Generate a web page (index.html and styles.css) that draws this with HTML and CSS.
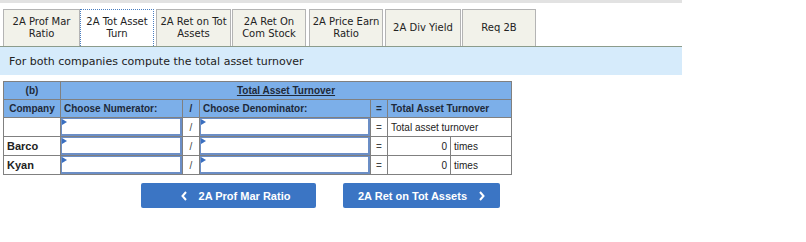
FILE: index.html
```html
<!DOCTYPE html>
<html lang="en">
<head>
  <meta charset="UTF-8">
  <title>Total Asset Turnover</title>
  <link rel="stylesheet" href="styles.css">
</head>
<body>
  <div class="topbar"></div>

  <div class="tabs">
    <div class="tab">2A Prof Mar<br>Ratio</div>
    <div class="tab active">2A Tot Asset<br>Turn</div>
    <div class="tab">2A Ret on Tot<br>Assets</div>
    <div class="tab">2A Ret On<br>Com Stock</div>
    <div class="tab">2A Price Earn<br>Ratio</div>
    <div class="tab">2A Div Yield</div>
    <div class="tab">Req 2B</div>
  </div>

  <div class="prompt">For both companies compute the total asset turnover</div>

  <table class="calc">
    <tr class="head">
      <th class="c-co">(b)</th>
      <th colspan="6" class="title"><u>Total Asset Turnover</u></th>
    </tr>
    <tr class="head">
      <th class="c-co">Company</th>
      <th class="left">Choose Numerator:</th>
      <th>/</th>
      <th class="left">Choose Denominator:</th>
      <th>=</th>
      <th colspan="2" class="left">Total Asset Turnover</th>
    </tr>
    <tr>
      <td></td>
      <td class="in"><div class="box"></div></td>
      <td class="op">/</td>
      <td class="in"><div class="box"></div></td>
      <td class="op">=</td>
      <td colspan="2">Total asset turnover</td>
    </tr>
    <tr>
      <td class="co">Barco</td>
      <td class="in"><div class="box"></div></td>
      <td class="op">/</td>
      <td class="in"><div class="box"></div></td>
      <td class="op">=</td>
      <td class="num">0</td>
      <td class="unit">times</td>
    </tr>
    <tr>
      <td class="co">Kyan</td>
      <td class="in"><div class="box"></div></td>
      <td class="op">/</td>
      <td class="in"><div class="box"></div></td>
      <td class="op">=</td>
      <td class="num">0</td>
      <td class="unit">times</td>
    </tr>
  </table>

  <div class="nav">
    <button class="navbtn prev">
      <svg class="chev" width="6" height="10" viewBox="0 0 6 10"><polyline points="5,1 1.5,5 5,9" fill="none" stroke="#fff" stroke-width="2"/></svg>
      2A Prof Mar Ratio
    </button>
    <button class="navbtn next">
      2A Ret on Tot Assets
      <svg class="chev" width="6" height="10" viewBox="0 0 6 10"><polyline points="1,1 4.5,5 1,9" fill="none" stroke="#fff" stroke-width="2"/></svg>
    </button>
  </div>
</body>
</html>
```

FILE: styles.css
```css
body {
  margin: 0;
  background: #fff;
  font-family: "DejaVu Sans", Verdana, sans-serif;
}

.topbar {
  width: 682px;
  height: 3px;
  background: #e2e2e2;
}

.tabs {
  display: flex;
  margin-top: 6px;
  padding-left: 3px;
  width: 679px;
}

.tab {
  box-sizing: border-box;
  height: 37px;
  width: 75px;
  margin-right: 2px;
  border: 1px solid #b4b4b4;
  border-bottom: none;
  background: #f2f2ea;
  color: #222;
  font-size: 10px;
  line-height: 12px;
  text-align: center;
  display: flex;
  align-items: center;
  justify-content: center;
}

.tab:nth-child(1) { width: 77px; margin-right: 0; }
.tab:nth-child(2) { width: 74px; }
.tab:nth-child(3) { width: 75px; margin-right: 1px; }
.tab:nth-child(4) { width: 74px; margin-right: 3px; }
.tab:nth-child(5) { width: 74px; margin-right: 2px; }
.tab:nth-child(6) { width: 76px; margin-right: 1px; }
.tab:nth-child(7) { width: 74px; }

.tab.active {
  background: #fff;
  border: 1px dotted #4a7ec0;
  border-bottom: none;
}

.prompt {
  width: 682px;
  box-sizing: border-box;
  height: 29px;
  border-top: 1px solid #8c9c8c;
  background: #d6ebfb;
  font-size: 11px;
  color: #222;
  padding: 8px 0 0 9px;
}

.calc {
  margin: 6px 0 0 3px;
  border-collapse: collapse;
  font-family: "Liberation Sans", Arial, sans-serif;
  font-size: 10px;
  color: #222;
}

.calc th,
.calc td {
  border: 1px solid #808080;
  height: 17px;
  padding: 0 3px;
}

.calc th {
  background: #7cafe9;
  font-weight: bold;
  text-align: center;
  font-size: 10px;
  color: #1e2a3a;
}

.calc th.left { text-align: left; }

.calc th.c-co { width: 50px; }

.calc .title u { font-weight: bold; }

.calc td { background: #fff; }

.calc td.co { font-weight: bold; font-size: 11px; }

.calc td.in {
  padding: 0;
  width: 121px;
}

.calc td.in + td.op + td.in { width: 170px; }

.calc td.op {
  text-align: center;
  width: 10px;
  color: #444;
}

.box {
  position: relative;
  box-sizing: border-box;
  height: 18px;
  border: 2px solid #6b8ec6;
  border-top-width: 1px;
  border-left-width: 1px;
}

.box::before {
  content: "";
  position: absolute;
  left: 0;
  top: 0;
  border-left: 5px solid #3a6fc0;
  border-top: 3px solid transparent;
  border-bottom: 3px solid transparent;
}

.calc td.num {
  text-align: right;
  width: 56px;
}

.calc td.unit { width: 54px; }

.nav {
  display: flex;
  margin: 8px 0 0 141px;
  gap: 27px;
}

.navbtn {
  box-sizing: border-box;
  height: 25px;
  border: none;
  border-radius: 2px;
  background: #3b75c4;
  color: #fff;
  font-family: "Liberation Sans", Arial, sans-serif;
  font-weight: bold;
  font-size: 11px;
  padding: 0;
  display: flex;
  align-items: center;
  justify-content: center;
  gap: 12px;
}

.navbtn.prev { width: 175px; padding-left: 14px; }
.navbtn.next { width: 157px; }
```
